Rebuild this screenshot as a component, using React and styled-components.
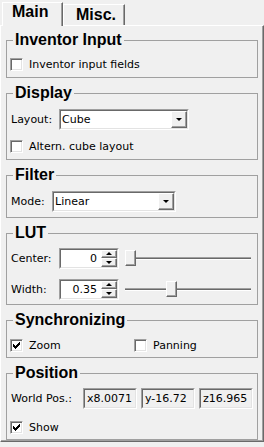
import React from "react";
import styled, { createGlobalStyle } from "styled-components";

const GlobalStyle = createGlobalStyle`
  html, body {
    margin: 0;
    padding: 0;
    background: #f0f0f0;
  }
  body {
    font-family: "DejaVu Sans", sans-serif;
    font-size: 11px;
    color: #000;
  }
`;

const Window = styled.div`
  width: 264px;
  height: 447px;
  background: #f0f0f0;
  overflow: hidden;
`;

const TabBar = styled.div`
  position: relative;
  z-index: 1;
  display: flex;
  align-items: flex-end;
  height: 25px;
  padding-left: 2px;
`;

const Tab = styled.div`
  box-sizing: border-box;
  width: ${(p) => p.$width}px;
  height: ${(p) => (p.$active ? 24 : 21)}px;
  margin-bottom: ${(p) => (p.$active ? -1 : 0)}px;
  padding: ${(p) => (p.$active ? "0 0 0 9px" : "1px 0 0 12px")};
  background: #f0f0f0;
  border-top: 1px solid #fff;
  border-left: 1px solid #fff;
  border-right: 1px solid #696969;
  box-shadow: inset -1px 0 0 #a0a0a0;
  font: bold 16px/18px "Liberation Sans", Arial, sans-serif;
`;

const Pane = styled.div`
  box-sizing: border-box;
  height: 417px;
  padding: 5px 5px 0 5px;
  border-top: 1px solid #fff;
  border-left: 1px solid #fff;
  border-right: 1px solid #696969;
  border-bottom: 1px solid #696969;
  box-shadow: inset -1px -1px 0 #a0a0a0;
  display: flex;
  flex-direction: column;
  gap: 6px;
`;

const Group = styled.fieldset`
  margin: 0;
  padding: 0;
  min-width: 0;
  border: 1px solid #a0a0a0;
`;

const Legend = styled.legend`
  margin-left: 6px;
  padding: 0 2px;
  font: bold 16px/18px "Liberation Sans", Arial, sans-serif;
`;

const Body = styled.div`
  display: flex;
  flex-direction: column;
  gap: ${(p) => p.$gap || 0}px;
  padding: ${(p) => p.$pt}px 4px ${(p) => p.$pb}px 4px;
`;

const Row = styled.div`
  display: flex;
  align-items: center;
  height: ${(p) => p.$h || 20}px;
`;

const Label = styled.span`
  width: ${(p) => p.$w}px;
  flex: none;
  white-space: nowrap;
`;

const CheckItem = styled.label`
  display: flex;
  align-items: center;
  width: ${(p) => (p.$w ? `${p.$w}px` : "auto")};
  margin-left: ${(p) => p.$ml ?? 0}px;
`;

const Box = styled.span`
  box-sizing: border-box;
  width: 13px;
  height: 13px;
  flex: none;
  background: #fff;
  border: 1px solid;
  border-color: #a0a0a0 #fff #fff #a0a0a0;
  box-shadow: inset 1px 1px 0 #696969, inset -1px -1px 0 #e3e3e3;
  display: flex;
  align-items: center;
  justify-content: center;
`;

const CheckText = styled.span`
  margin-left: 6px;
  white-space: nowrap;
`;

const Sunken = styled.div`
  box-sizing: border-box;
  width: ${(p) => p.$w}px;
  height: ${(p) => p.$h || 21}px;
  flex: none;
  border: 1px solid;
  border-color: #a0a0a0 #fff #fff #a0a0a0;
  background: ${(p) => (p.$readOnly ? "#f0f0f0" : "#fff")};
`;

const SunkenInner = styled.div`
  box-sizing: border-box;
  height: 100%;
  border: 1px solid;
  border-color: #696969 #e3e3e3 #e3e3e3 #696969;
  display: flex;
  align-items: center;
  overflow: hidden;
`;

const FieldText = styled.span`
  flex: 1;
  padding: 0 ${(p) => (p.$right ? 4 : 1)}px 0 ${(p) => (p.$right ? 0 : 1)}px;
  text-align: ${(p) => (p.$right ? "right" : "left")};
  white-space: nowrap;
  overflow: hidden;
`;

const Raised = styled.div`
  box-sizing: border-box;
  width: 16px;
  flex: none;
  background: #f0f0f0;
  border: 1px solid;
  border-color: #fff #696969 #696969 #fff;
  box-shadow: inset -1px -1px 0 #a0a0a0;
  display: flex;
  align-items: center;
  justify-content: center;
`;

const DropButton = styled(Raised)`
  height: 100%;
`;

const SpinButtons = styled.div`
  display: flex;
  flex-direction: column;
  height: 100%;
`;

const SpinButton = styled(Raised)`
  flex: 1;
`;

const Arrow = styled.span`
  width: 0;
  height: 0;
  border-left: ${(p) => p.$size}px solid transparent;
  border-right: ${(p) => p.$size}px solid transparent;
  ${(p) =>
    p.$up
      ? `border-bottom: ${p.$size}px solid #000;`
      : `border-top: ${p.$size}px solid #000;`}
`;

const Slider = styled.div`
  position: relative;
  flex: 1;
  height: 20px;
  margin: 0 2px 0 6px;
  display: flex;
  align-items: center;
`;

const Track = styled.div`
  flex: 1;
  height: 2px;
  border-top: 1px solid #a0a0a0;
  border-bottom: 1px solid #fff;
  background: #696969;
  height: 1px;
`;

const Handle = styled(Raised)`
  position: absolute;
  top: 2px;
  width: 11px;
  height: 16px;
  background: #f0f0f0;
`;

const Fields = styled.div`
  display: flex;
  gap: 4px;
`;

const CheckMark = () => (
  <svg width="7" height="7" viewBox="0 0 7 7">
    <path
      d="M0 2h1v3H0zM1 3h1v3H1zM2 4h1v3H2zM3 3h1v3H3zM4 2h1v3H4zM5 1h1v3H5zM6 0h1v3H6z"
      fill="#000"
    />
  </svg>
);

const Check = ({ checked, label, w, ml = -1 }) => (
  <CheckItem $w={w} $ml={ml}>
    <Box>{checked && <CheckMark />}</Box>
    <CheckText>{label}</CheckText>
  </CheckItem>
);

const Combo = ({ value, w }) => (
  <Sunken $w={w}>
    <SunkenInner>
      <FieldText>{value}</FieldText>
      <DropButton>
        <Arrow $size={3.5} />
      </DropButton>
    </SunkenInner>
  </Sunken>
);

const Spin = ({ value }) => (
  <Sunken $w={60}>
    <SunkenInner>
      <FieldText $right>{value}</FieldText>
      <SpinButtons>
        <SpinButton>
          <Arrow $up $size={3} />
        </SpinButton>
        <SpinButton>
          <Arrow $size={3} />
        </SpinButton>
      </SpinButtons>
    </SunkenInner>
  </Sunken>
);

const LutSlider = ({ pos }) => (
  <Slider>
    <Track />
    <Handle style={{ left: pos }} />
  </Slider>
);

const ReadField = ({ value }) => (
  <Sunken $w={54} $readOnly>
    <SunkenInner>
      <FieldText style={{ paddingLeft: 2 }}>{value}</FieldText>
    </SunkenInner>
  </Sunken>
);

export default function App() {
  return (
    <Window>
      <GlobalStyle />
      <TabBar>
        <Tab $active $width={61}>Main</Tab>
        <Tab $width={62}>Misc.</Tab>
      </TabBar>
      <Pane>
        <Group>
          <Legend>Inventor Input</Legend>
          <Body $pt={5} $pb={3}>
            <Row>
              <Check label="Inventor input fields" />
            </Row>
          </Body>
        </Group>

        <Group>
          <Legend>Display</Legend>
          <Body $pt={6} $pb={3} $gap={6}>
            <Row $h={22}>
              <Label $w={48}>Layout:</Label>
              <Combo value="Cube" w={130} />
            </Row>
            <Row>
              <Check label="Altern. cube layout" />
            </Row>
          </Body>
        </Group>

        <Group>
          <Legend>Filter</Legend>
          <Body $pt={6} $pb={5}>
            <Row $h={22}>
              <Label $w={41}>Mode:</Label>
              <Combo value="Linear" w={124} />
            </Row>
          </Body>
        </Group>

        <Group>
          <Legend>LUT</Legend>
          <Body $pt={5} $pb={4} $gap={9}>
            <Row $h={22}>
              <Label $w={48}>Center:</Label>
              <Spin value="0" />
              <LutSlider pos={0} />
            </Row>
            <Row $h={22}>
              <Label $w={48}>Width:</Label>
              <Spin value="0.35" />
              <LutSlider pos={41} />
            </Row>
          </Body>
        </Group>

        <Group>
          <Legend>Synchronizing</Legend>
          <Body $pt={6} $pb={2}>
            <Row>
              <Check checked label="Zoom" w={124} />
              <Check label="Panning" ml={0} />
            </Row>
          </Body>
        </Group>

        <Group>
          <Legend>Position</Legend>
          <Body $pt={5} $pb={2} $gap={8}>
            <Row $h={22}>
              <Label $w={72}>World Pos.:</Label>
              <Fields>
                <ReadField value="x8.0071" />
                <ReadField value="y-16.72" />
                <ReadField value="z16.965" />
              </Fields>
            </Row>
            <Row>
              <Check checked label="Show" />
            </Row>
          </Body>
        </Group>
      </Pane>
    </Window>
  );
}
